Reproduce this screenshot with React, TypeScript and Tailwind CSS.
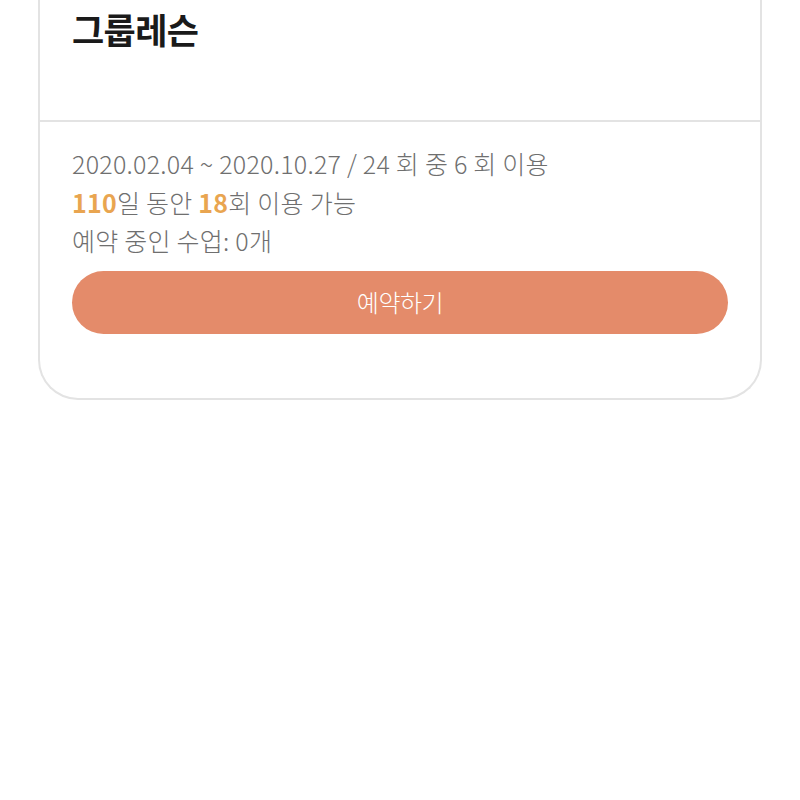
export default function App() {
  return (
    <div className="min-h-[800px] bg-white font-['Noto_Sans_CJK_KR','Noto_Sans',sans-serif]">
      <div className="mx-[38px] border-2 border-t-0 border-[#e3e3e3] rounded-b-[40px] bg-white">
        {/* Title */}
        <div className="h-[120px] px-[32px] pt-[6px]">
          <h1 className="text-[35px] leading-[46px] font-bold tracking-[-0.6px] text-[#1a1a1a]">그룹레슨</h1>
        </div>
        <div className="h-[2px] bg-[#e3e3e3]" />

        {/* Body */}
        <div className="px-[32px] pt-[22px] pb-[64px]">
          <div className="text-[25px] leading-[38.5px] font-light text-[#6f6f6f] tracking-[0.25px]">
            <p>2020.02.04 ~ 2020.10.27 / 24 회 중 6 회 이용</p>
            <p>
              <span className="font-bold text-[#e9a550]">110</span>일 동안{" "}
              <span className="font-bold text-[#e9a550]">18</span>회 이용 가능
            </p>
            <p>예약 중인 수업: 0개</p>
          </div>
          <button className="mt-[11px] w-full h-[63px] rounded-full bg-[#e48b6a] text-white text-[24px] font-light tracking-[-0.5px]">
            예약하기
          </button>
        </div>
      </div>
    </div>
  );
}
